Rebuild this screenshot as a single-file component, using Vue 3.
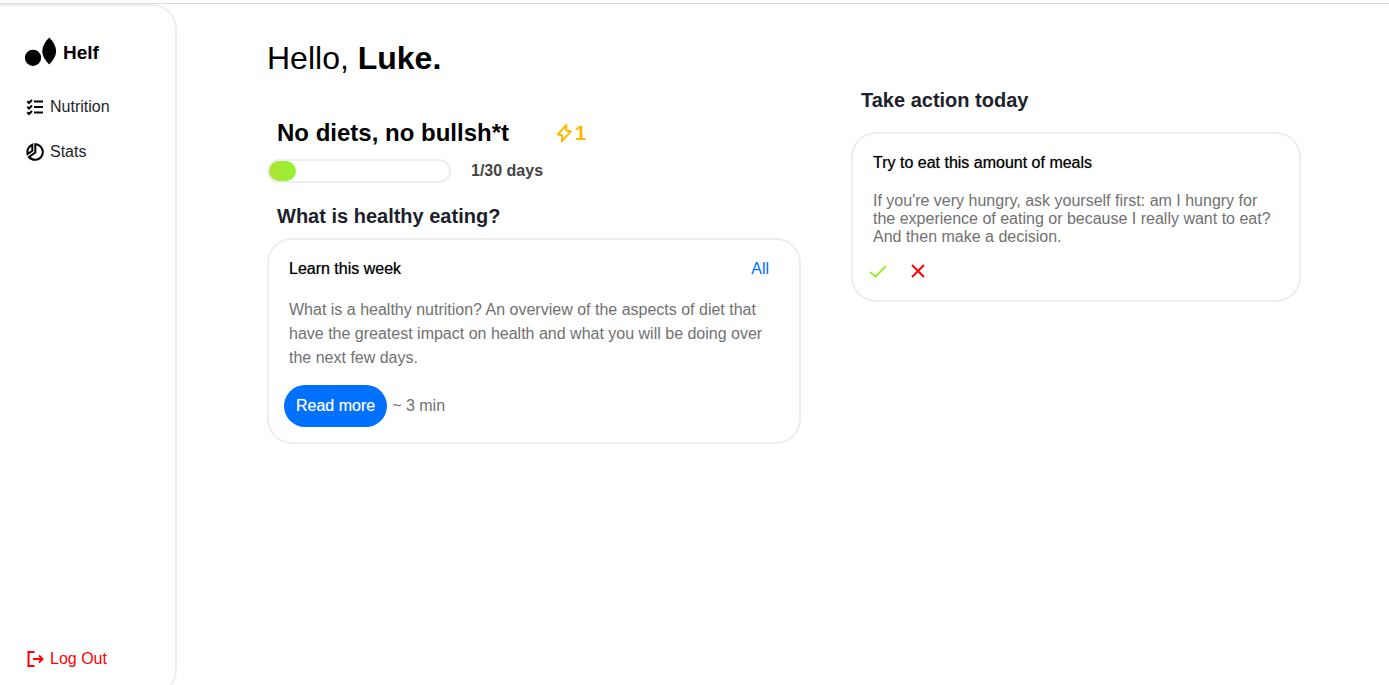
<script setup>
import { ref } from 'vue'

const day = ref(1)
const totalDays = 30
const progress = 15
</script>

<template>
  <div class="app">
    <aside class="sidebar">
      <a class="brand" href="#">
        <svg width="33" height="30" viewBox="0 0 33 30" aria-hidden="true">
          <circle cx="9" cy="19.8" r="8.1" />
          <path d="M25.200 -0.400C29.500 4 32.100 8.600 32.100 13.200C32.100 18 29.500 22.200 25.200 26.500C20.900 22.200 18.300 18 18.300 13.200C18.300 8.600 20.900 4 25.200 -0.400Z" />
        </svg>
        <span>Helf</span>
      </a>
      <nav class="nav">
        <a href="#" class="nav-link">
          <svg class="icon stroke" viewBox="0 0 18 18" aria-hidden="true">
            <path d="M8 3.500H17M8 9H17M8 14.500H17M1.300 3.300L3 5L6 2M1.300 8.800L3 10.500L6 7.500M1.300 14.300L3 16L6 13" />
          </svg>
          <span>Nutrition</span>
        </a>
        <a href="#" class="nav-link">
          <svg class="icon stroke" viewBox="0 0 18 18" aria-hidden="true">
            <path d="M9.300 1.200A7.800 7.800 0 1 1 3 14L9.300 9.500ZM6.300 1.800V7.800L1.500 11A8 8 0 0 1 6.300 1.800Z" />
          </svg>
          <span>Stats</span>
        </a>
      </nav>
      <button class="logout" type="button">
        <svg class="icon stroke" viewBox="0 0 18 18" aria-hidden="true">
          <path d="M8.500 2H2.500V16H8.500M7 9H16.500M13 5.500L16.500 9L13 12.500" />
        </svg>
        <span>Log Out</span>
      </button>
    </aside>

    <main class="main">
      <section class="learn">
        <h1>Hello, <b>Luke.</b></h1>
        <div class="challenge">
          <h2>No diets, no bullsh*t</h2>
          <div class="streak">
            <svg width="18" height="22" viewBox="0 0 18 22" aria-hidden="true">
              <path d="M11.300 3L2.700 12.500L7.200 13.300L7 19.200L15.800 9.300L11.200 8.500Z" />
            </svg>
            <span>{{ day }}</span>
          </div>
        </div>
        <div class="progress-row">
          <div class="track" role="progressbar" aria-label="Days completed" :aria-valuenow="day" :aria-valuemax="totalDays">
            <div class="fill" :style="{ width: progress + '%' }"></div>
          </div>
          <span class="days">{{ day }}/{{ totalDays }} days</span>
        </div>
        <h3>What is healthy eating?</h3>
        <article class="card lesson">
          <header class="card-head">
            <h4>Learn this week</h4>
            <a href="#">All</a>
          </header>
          <p>
            What is a healthy nutrition? An overview of the aspects of diet that have the greatest
            impact on health and what you will be doing over the next few days.
          </p>
          <div class="lesson-foot">
            <button class="read" type="button">Read more</button>
            <span>~ 3 min</span>
          </div>
        </article>
      </section>

      <section class="action">
        <h3>Take action today</h3>
        <article class="card task">
          <h4>Try to eat this amount of meals</h4>
          <p>
            If you're very hungry, ask yourself first: am I hungry for the experience of eating or
            because I really want to eat? And then make a decision.
          </p>
          <div class="choices">
            <button type="button" class="yes" aria-label="Done">
              <svg width="20" height="20" viewBox="0 0 20 20" aria-hidden="true">
                <path d="M2 11L7.500 15.700L18 5" />
              </svg>
            </button>
            <button type="button" class="no" aria-label="Skip">
              <svg width="20" height="20" viewBox="0 0 20 20" aria-hidden="true">
                <path d="M4 4L16 16M16 4L4 16" />
              </svg>
            </button>
          </div>
        </article>
      </section>
    </main>
  </div>
</template>

<style>
body {
  overflow: hidden;
  background: #fff;
}
</style>

<style scoped>
.app {
  display: flex;
  box-sizing: border-box;
  height: 100vh;
  padding-top: 3px;
  font: 16px/24px "Liberation Sans", Arial, sans-serif;
  color: #000;
}
.app::before {
  content: "";
  position: absolute;
  top: 3px;
  left: 0;
  right: 0;
  height: 1px;
  background: #dcdcdc;
}
h1, h2, h3, h4, p {
  margin: 0;
}
a {
  color: inherit;
  text-decoration: none;
}
button {
  border: 0;
  padding: 0;
  background: none;
  font: inherit;
  cursor: pointer;
}
svg {
  display: block;
  flex: none;
  overflow: visible;
}
.sidebar {
  box-sizing: border-box;
  display: flex;
  flex-direction: column;
  flex: none;
  width: 177px;
  height: calc(100vh + 6px);
  margin-top: 1px;
  padding: 32px 24px 22px;
  border: 2px solid #eee;
  border-left: 0;
  border-radius: 0 25px 25px 0;
}
.brand {
  display: flex;
  align-items: center;
  gap: 6px;
  font-size: 19px;
  font-weight: 700;
}
.nav {
  display: flex;
  flex-direction: column;
  gap: 21px;
  margin-top: 27px;
  color: #1d1f2b;
}
.nav-link,
.logout {
  display: flex;
  align-items: center;
  gap: 6px;
  padding-left: 2px;
}
.icon {
  width: 18px;
  height: 18px;
}
.stroke {
  fill: none;
  stroke: #000;
  stroke-width: 2;
}
.logout {
  margin-top: auto;
  color: #f00;
}
.logout .stroke {
  stroke: #f00;
}
.main {
  flex: 1;
  display: grid;
  grid-template-columns: 534fr 450fr;
  gap: 50px;
  align-items: start;
  padding: 35px 88px 0 90px;
}
h1 {
  font-size: 32px;
  line-height: 40px;
  font-weight: 400;
}
.challenge {
  display: flex;
  align-items: center;
  gap: 46px;
  margin: 40px 0 0 10px;
}
h2 {
  font-size: 24px;
  line-height: 30px;
}
.streak {
  display: flex;
  align-items: center;
  gap: 2px;
  color: #ffb800;
  font-size: 20px;
  font-weight: 700;
}
.streak path {
  fill: none;
  stroke: #ffb800;
  stroke-width: 2;
  stroke-linejoin: round;
}
.progress-row {
  display: flex;
  align-items: center;
  gap: 20px;
  margin-top: 11px;
}
.track {
  box-sizing: border-box;
  width: 184px;
  height: 24px;
  border: 2px solid #eee;
  border-radius: 12px;
}
.fill {
  height: 20px;
  border-radius: 10px;
  background: linear-gradient(90deg, #aee335, #94f22f);
}
.days {
  color: #444;
  font-weight: 700;
}
h3 {
  padding-left: 10px;
  color: #1d1f2b;
  font-size: 20px;
  line-height: 26px;
}
.learn h3 {
  margin: 20px 0 9px;
}
.card {
  box-sizing: border-box;
  border: 2px solid #eee;
  border-radius: 25px;
}
.card p {
  color: #717171;
}
h4 {
  font-size: 16px;
  font-weight: 400;
  text-shadow: 0 0 1px rgba(0, 0, 0, 0.5);
}
.lesson {
  padding: 17px 30px 15px 20px;
}
.card-head {
  display: flex;
  justify-content: space-between;
}
.card-head a {
  color: #0070ff;
}
.lesson p {
  margin-top: 17px;
}
.lesson-foot {
  display: flex;
  align-items: center;
  gap: 5px;
  margin: 15px 0 0 -5px;
  color: #717171;
}
.read {
  height: 42px;
  padding: 0 12px;
  border-radius: 21px;
  background: #0070ff;
  color: #fff;
  text-shadow: 0 0 1px rgba(255, 255, 255, 0.5);
}
.action {
  padding-top: 49px;
}
.task {
  margin-top: 19px;
  padding: 17px 20px 19px 20px;
}
.task p {
  margin-top: 17px;
  line-height: 18px;
}
.choices {
  display: flex;
  gap: 20px;
  margin: 15px 0 0 -5px;
}
.choices path {
  fill: none;
  stroke-width: 2;
}
.yes path {
  stroke: #94f22f;
}
.no path {
  stroke: #f00;
}
</style>
